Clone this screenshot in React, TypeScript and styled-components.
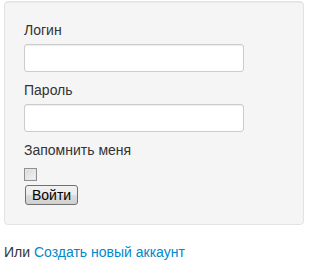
import React from 'react'
import styled, { createGlobalStyle } from 'styled-components'

const GlobalStyle = createGlobalStyle`
  body {
    margin: 0;
    background: #fff;
    font-family: 'Liberation Sans', Arial, sans-serif;
    font-size: 14px;
    line-height: 18px;
    color: #333;
  }
`

const Page = styled.div`
  padding: 1px 4px 0;
`

const Well = styled.form`
  width: 260px;
  padding: 19px;
  margin: 0 0 18px;
  background: #f5f5f5;
  border: 1px solid #e3e3e3;
  border-radius: 4px;
  box-shadow: inset 0 1px 1px rgba(0, 0, 0, 0.05);
`

const Label = styled.label`
  display: block;
  margin-bottom: 5px;
  line-height: 18px;
`

const TextInput = styled.input`
  display: block;
  box-sizing: content-box;
  width: 210px;
  height: 18px;
  padding: 4px;
  margin: 0 0 9px;
  border: 1px solid #ccc;
  border-radius: 3px;
  background: #fff;
  box-shadow: inset 0 1px 1px rgba(0, 0, 0, 0.075);
  font: inherit;
  outline: none;
`

const Check = styled.input`
  appearance: none;
  display: block;
  width: 13px;
  height: 13px;
  margin: 9px 0 4px;
  border: 1px solid #8f8f8f;
  box-sizing: border-box;
  background: linear-gradient(135deg, #d8d8d8 0%, #f4f4f4 100%);
  box-shadow: inset 0 0 0 1px #e6e6e6;
`

const Button = styled.button`
  display: block;
  height: 20px;
  margin-left: 1px;
  padding: 0 6px;
  border: 1px solid #707070;
  border-radius: 3px;
  background: linear-gradient(#f2f2f2 0%, #ebebeb 50%, #dddddd 51%, #cfcfcf 100%);
  font-family: 'Liberation Sans', Arial, sans-serif;
  font-size: 14px;
  line-height: 16px;
  color: #000;
`

const Footer = styled.p`
  margin: 0;
  line-height: 18px;
`

const Link = styled.a`
  color: #0088cc;
  text-decoration: none;
`

export default function App() {
  return (
    <Page>
      <GlobalStyle />
      <Well onSubmit={(e) => e.preventDefault()}>
        <Label htmlFor='login'>Логин</Label>
        <TextInput id='login' type='text' />
        <Label htmlFor='password'>Пароль</Label>
        <TextInput id='password' type='password' />
        <Label htmlFor='remember'>Запомнить меня</Label>
        <Check id='remember' type='checkbox' />
        <Button type='submit'>Войти</Button>
      </Well>
      <Footer>
        Или <Link href='#'>Создать новый аккаунт</Link>
      </Footer>
    </Page>
  )
}
